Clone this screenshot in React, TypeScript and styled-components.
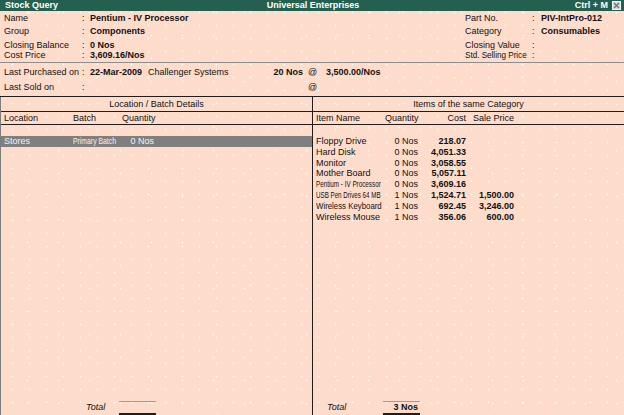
import React from "react";
import styled, { createGlobalStyle } from "styled-components";

const Global = createGlobalStyle`
  html, body { margin: 0; padding: 0; background: #fedccb; }
  body { font-family: "Liberation Sans", Arial, sans-serif; font-size: 9px; color: #111; }
  * { box-sizing: border-box; }
`;

const Screen = styled.div`
  width: 624px;
  height: 415px;
  display: flex;
  flex-direction: column;
  overflow: hidden;
  line-height: 11px;
  background-color: #fedccb;
  background-image:
    radial-gradient(circle, rgba(255, 255, 255, 1) 0 0.7px, transparent 1.1px),
    radial-gradient(circle, rgba(255, 255, 255, 0.9) 0 0.7px, transparent 1.1px);
  background-size: 17px 13px, 31px 23px;
  background-position: 4px 6px, 12px 1px;
`;

const TitleBar = styled.div`
  height: 11px;
  flex: none;
  background: #245f4f;
  color: #fff;
  font-weight: bold;
  display: grid;
  grid-template-columns: 1fr auto 1fr;
  align-items: center;
  padding: 0 3px 0 5px;
  line-height: 11px;
`;

const TitleRight = styled.div`
  display: flex;
  justify-content: flex-end;
  align-items: center;
  gap: 4px;
`;

const CloseBox = styled.span`
  width: 9px;
  height: 9px;
  background: #d9d9d9;
  border: 1px solid #f2f2f2;
  display: inline-flex;
  align-items: center;
  justify-content: center;
`;

const InfoGrid = styled.div`
  display: grid;
  grid-template-columns: 78px 8px 375px 67px 9px 1fr;
  grid-template-rows: 13px 14px 10px 11px;
  padding: 2px 0 1px 4px;
  flex: none;
`;

const PurchaseGrid = styled.div`
  display: grid;
  grid-template-columns: 78px 8px 58px 100px 55px 23px 1fr;
  grid-template-rows: 15px 11px;
  padding: 4px 0 3px 4px;
  flex: none;
`;

const Label = styled.span`
  white-space: nowrap;
`;

const Value = styled.span<{ $right?: boolean }>`
  font-weight: bold;
  white-space: nowrap;
  text-align: ${(p) => (p.$right ? "right" : "left")};
`;

const Plain = styled.span<{ $pad?: number }>`
  white-space: nowrap;
  padding-left: ${(p) => p.$pad ?? 0}px;
`;

const Rule = styled.div<{ $dark?: boolean }>`
  height: 1px;
  flex: none;
  background: ${(p) => (p.$dark ? "#1e1e1e" : "#8d8d8d")};
`;

const Panels = styled.div`
  flex: 1;
  display: grid;
  grid-template-columns: 312px 1fr;
  border-left: 1px solid #7d7d7d;
  min-height: 0;
`;

const Panel = styled.div<{ $divider?: boolean }>`
  display: flex;
  flex-direction: column;
  border-right: ${(p) => (p.$divider ? "1px solid #1e1e1e" : "none")};
  min-height: 0;
`;

const Caption = styled.div`
  height: 15px;
  padding-top: 2px;
  text-align: center;
  border-bottom: 1px solid #1e1e1e;
  flex: none;
`;

const ColumnHead = styled.div<{ $cols: string }>`
  display: grid;
  grid-template-columns: ${(p) => p.$cols};
  height: 13px;
  padding: 1px 0 0 3px;
  border-bottom: 1px solid #1e1e1e;
  font-weight: bold;
  flex: none;
`;

const Body = styled.div`
  flex: 1;
  padding-top: 11px;
  display: flex;
  flex-direction: column;
`;

const Row = styled.div<{ $cols: string; $hl?: boolean }>`
  display: grid;
  grid-template-columns: ${(p) => p.$cols};
  height: 10.8px;
  line-height: 10.8px;
  padding-left: 3px;
  background: ${(p) => (p.$hl ? "#7f7f7f" : "transparent")};
  color: ${(p) => (p.$hl ? "#f4f4f4" : "#111")};
`;

const Cell = styled.span<{ $right?: boolean; $bold?: boolean }>`
  white-space: nowrap;
  text-align: ${(p) => (p.$right ? "right" : "left")};
  font-weight: ${(p) => (p.$bold ? "bold" : "normal")};
  overflow: visible;
`;

const Squeeze = styled.span<{ $scale: number }>`
  display: inline-block;
  transform: scaleX(${(p) => p.$scale});
  transform-origin: left center;
  white-space: nowrap;
`;

const Footer = styled.div<{ $pad: number; $label: number }>`
  display: grid;
  grid-template-columns: ${(p) => p.$label}px 37px;
  padding-left: ${(p) => p.$pad}px;
  height: 14px;
  flex: none;
`;

const FooterLabel = styled.span`
  font-style: italic;
  padding-top: 1px;
`;

const TotalCell = styled.span`
  border-top: 1px solid #9d9d9d;
  border-bottom: 2px solid #1e1e1e;
  text-align: right;
  padding-right: 2px;
  font-weight: bold;
  line-height: 11px;
`;

const LEFT_COLS = "69px 49px 32px";
const RIGHT_COLS = "69px 33px 48px 48px";

type Item = { name: string; qty: string; cost: string; sale?: string; scale?: number };

const items: Item[] = [
  { name: "Floppy Drive", qty: "0 Nos", cost: "218.07" },
  { name: "Hard Disk", qty: "0 Nos", cost: "4,051.33" },
  { name: "Monitor", qty: "0 Nos", cost: "3,058.55" },
  { name: "Mother Board", qty: "0 Nos", cost: "5,057.11" },
  { name: "Pentium - IV Processor", qty: "0 Nos", cost: "3,609.16", scale: 0.7 },
  { name: "USB Pen Drives 64 MB", qty: "1 Nos", cost: "1,524.71", sale: "1,500.00", scale: 0.69 },
  { name: "Wireless Keyboard", qty: "1 Nos", cost: "692.45", sale: "3,246.00", scale: 0.87 },
  { name: "Wireless Mouse", qty: "1 Nos", cost: "356.06", sale: "600.00" },
];

export default function App() {
  return (
    <>
      <Global />
      <Screen>
        <TitleBar>
          <span>Stock Query</span>
          <span>Universal Enterprises</span>
          <TitleRight>
            <span>Ctrl + M</span>
            <CloseBox>
              <svg width="7" height="7" viewBox="0 0 7 7">
                <path d="M1 1 L6 6 M6 1 L1 6" stroke="#6e6e6e" strokeWidth="1.2" />
              </svg>
            </CloseBox>
          </TitleRight>
        </TitleBar>

        <InfoGrid>
          <Label>Name</Label>
          <Plain>:</Plain>
          <Value>Pentium - IV Processor</Value>
          <Label>Part No.</Label>
          <Plain>:</Plain>
          <Value>PIV-IntPro-012</Value>

          <Label>Group</Label>
          <Plain>:</Plain>
          <Value>Components</Value>
          <Label>Category</Label>
          <Plain>:</Plain>
          <Value>Consumables</Value>

          <Label>Closing Balance</Label>
          <Plain>:</Plain>
          <Value>0 Nos</Value>
          <Label>Closing Value</Label>
          <Plain>:</Plain>
          <Value></Value>

          <Label>Cost Price</Label>
          <Plain>:</Plain>
          <Value>3,609.16/Nos</Value>
          <Label>
            <Squeeze $scale={0.9}>Std. Selling Price</Squeeze>
          </Label>
          <Plain>:</Plain>
          <Value></Value>
        </InfoGrid>

        <Rule />

        <PurchaseGrid>
          <Label>Last Purchased on</Label>
          <Plain>:</Plain>
          <Value>22-Mar-2009</Value>
          <Plain>Challenger Systems</Plain>
          <Value $right>20 Nos</Value>
          <Plain $pad={5}>@</Plain>
          <Value>3,500.00/Nos</Value>

          <Label>Last Sold on</Label>
          <Plain>:</Plain>
          <Value></Value>
          <Plain></Plain>
          <Value $right></Value>
          <Plain $pad={5}>@</Plain>
          <Value></Value>
        </PurchaseGrid>

        <Rule $dark />

        <Panels>
          <Panel $divider>
            <Caption>Location / Batch Details</Caption>
            <ColumnHead $cols={LEFT_COLS}>
              <Cell>Location</Cell>
              <Cell>Batch</Cell>
              <Cell $right>Quantity</Cell>
            </ColumnHead>
            <Body>
              <Row $cols={LEFT_COLS} $hl>
                <Cell>Stores</Cell>
                <Cell>
                  <Squeeze $scale={0.76}>Primary Batch</Squeeze>
                </Cell>
                <Cell $right>0 Nos</Cell>
              </Row>
            </Body>
            <Footer $pad={85} $label={33}>
              <FooterLabel>Total</FooterLabel>
              <TotalCell></TotalCell>
            </Footer>
          </Panel>

          <Panel>
            <Caption>Items of the same Category</Caption>
            <ColumnHead $cols={RIGHT_COLS}>
              <Cell>Item Name</Cell>
              <Cell $right>Quantity</Cell>
              <Cell $right>Cost</Cell>
              <Cell $right>Sale Price</Cell>
            </ColumnHead>
            <Body>
              {items.map((it) => (
                <Row key={it.name} $cols={RIGHT_COLS}>
                  <Cell>
                    {it.scale ? <Squeeze $scale={it.scale}>{it.name}</Squeeze> : it.name}
                  </Cell>
                  <Cell $right>{it.qty}</Cell>
                  <Cell $right $bold>{it.cost}</Cell>
                  <Cell $right $bold>{it.sale ?? ""}</Cell>
                </Row>
              ))}
            </Body>
            <Footer $pad={14} $label={56}>
              <FooterLabel>Total</FooterLabel>
              <TotalCell>3 Nos</TotalCell>
            </Footer>
          </Panel>
        </Panels>
      </Screen>
    </>
  );
}
